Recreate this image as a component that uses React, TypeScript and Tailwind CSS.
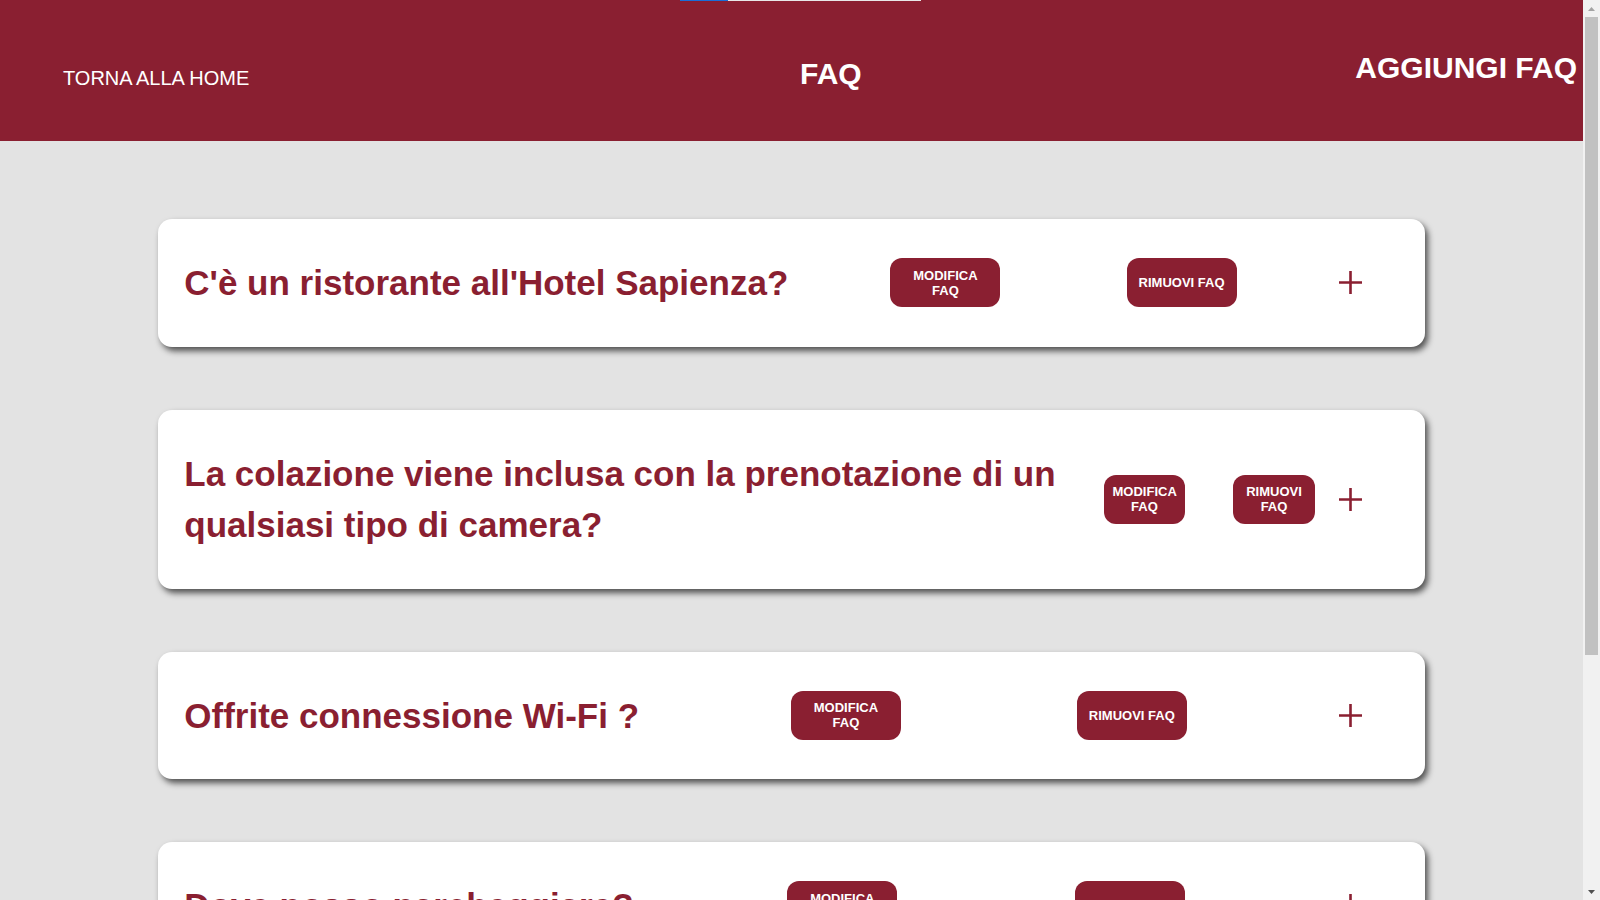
import { useState } from "react";

type Faq = { id: number; question: string };

const faqs: Faq[] = [
  { id: 1, question: "C'è un ristorante all'Hotel Sapienza?" },
  { id: 2, question: "La colazione viene inclusa con la prenotazione di un qualsiasi tipo di camera?" },
  { id: 3, question: "Offrite connessione Wi-Fi ?" },
  { id: 4, question: "Dove posso parcheggiare?" },
  { id: 5, question: "Gli animali domestici sono ammessi?" },
];

function PlusIcon() {
  return (
    <svg width="23" height="23" viewBox="0 0 23 23" className="shrink-0">
      <path d="M11.5 0v23M0 11.5h23" stroke="#8a1f31" strokeWidth="2.6" fill="none" />
    </svg>
  );
}

function FaqCard({ faq }: { faq: Faq }) {
  const [open, setOpen] = useState(false);

  return (
    <div className="w-[80%] mx-auto bg-white rounded-[14px] shadow-[3px_4px_6px_rgba(0,0,0,0.65)]">
      <div className="flex items-center justify-between pl-[26px] pr-[63px] py-[38px]">
        <h2 className="text-[35px] leading-[51.5px] font-bold text-[#8a1f31]">
          {faq.question}
        </h2>
        <button className="w-[110px] h-[49px] mx-6 px-[9px] rounded-[12px] bg-[#8a1f31] text-white text-[13px] leading-[15px] font-bold">
          MODIFICA FAQ
        </button>
        <button className="w-[110px] h-[49px] mx-6 px-[9px] rounded-[12px] bg-[#8a1f31] text-white text-[13px] leading-[15px] font-bold">
          RIMUOVI FAQ
        </button>
        <button onClick={() => setOpen(!open)} className="shrink-0 flex">
          <PlusIcon />
        </button>
      </div>
      {open && <div className="px-[26px] pb-6 text-gray-700">...</div>}
    </div>
  );
}

function Scrollbar() {
  return (
    <div className="w-[17px] h-full shrink-0 flex flex-col bg-[#f1f1f1]">
      <div className="h-[17px] flex items-center justify-center">
        <svg width="7" height="4" viewBox="0 0 7 4">
          <path d="M3.5 0L7 4H0z" fill="#a3a3a3" />
        </svg>
      </div>
      <div className="flex-1 flex flex-col">
        <div className="h-[638px] mx-[2px] bg-[#c1c1c1]" />
      </div>
      <div className="h-[17px] flex items-center justify-center">
        <svg width="7" height="4" viewBox="0 0 7 4">
          <path d="M0 0h7L3.5 4z" fill="#505050" />
        </svg>
      </div>
    </div>
  );
}

export default function App() {
  return (
    <div className="h-screen flex overflow-hidden font-['Liberation_Sans',Arial,sans-serif]">
      <div className="flex-1 min-w-0 overflow-hidden bg-[#e3e3e3]">
        {/* Header */}
        <div className="h-[141px] bg-[#8a1f31] flex flex-col">
          <div className="h-px flex ml-[680px]">
            <div className="w-[48px] bg-[#1a6ed8]" />
            <div className="w-[193px] bg-[#e8e8e8]" />
          </div>
          <div className="flex items-start text-white">
            <div className="w-[800px] pl-[63px] pt-[67px] text-[20px] leading-none">
              TORNA ALLA HOME
            </div>
            <div className="pt-[58px] text-[30px] leading-none font-bold">FAQ</div>
            <div className="ml-auto mr-[6px] pt-[52px] text-[30px] leading-none font-bold">
              AGGIUNGI FAQ
            </div>
          </div>
        </div>

        {/* FAQ list */}
        <div className="flex flex-col gap-[63px] pt-[78px] pb-[60px]">
          {faqs.map((faq) => (
            <FaqCard key={faq.id} faq={faq} />
          ))}
        </div>
      </div>
      <Scrollbar />
    </div>
  );
}
